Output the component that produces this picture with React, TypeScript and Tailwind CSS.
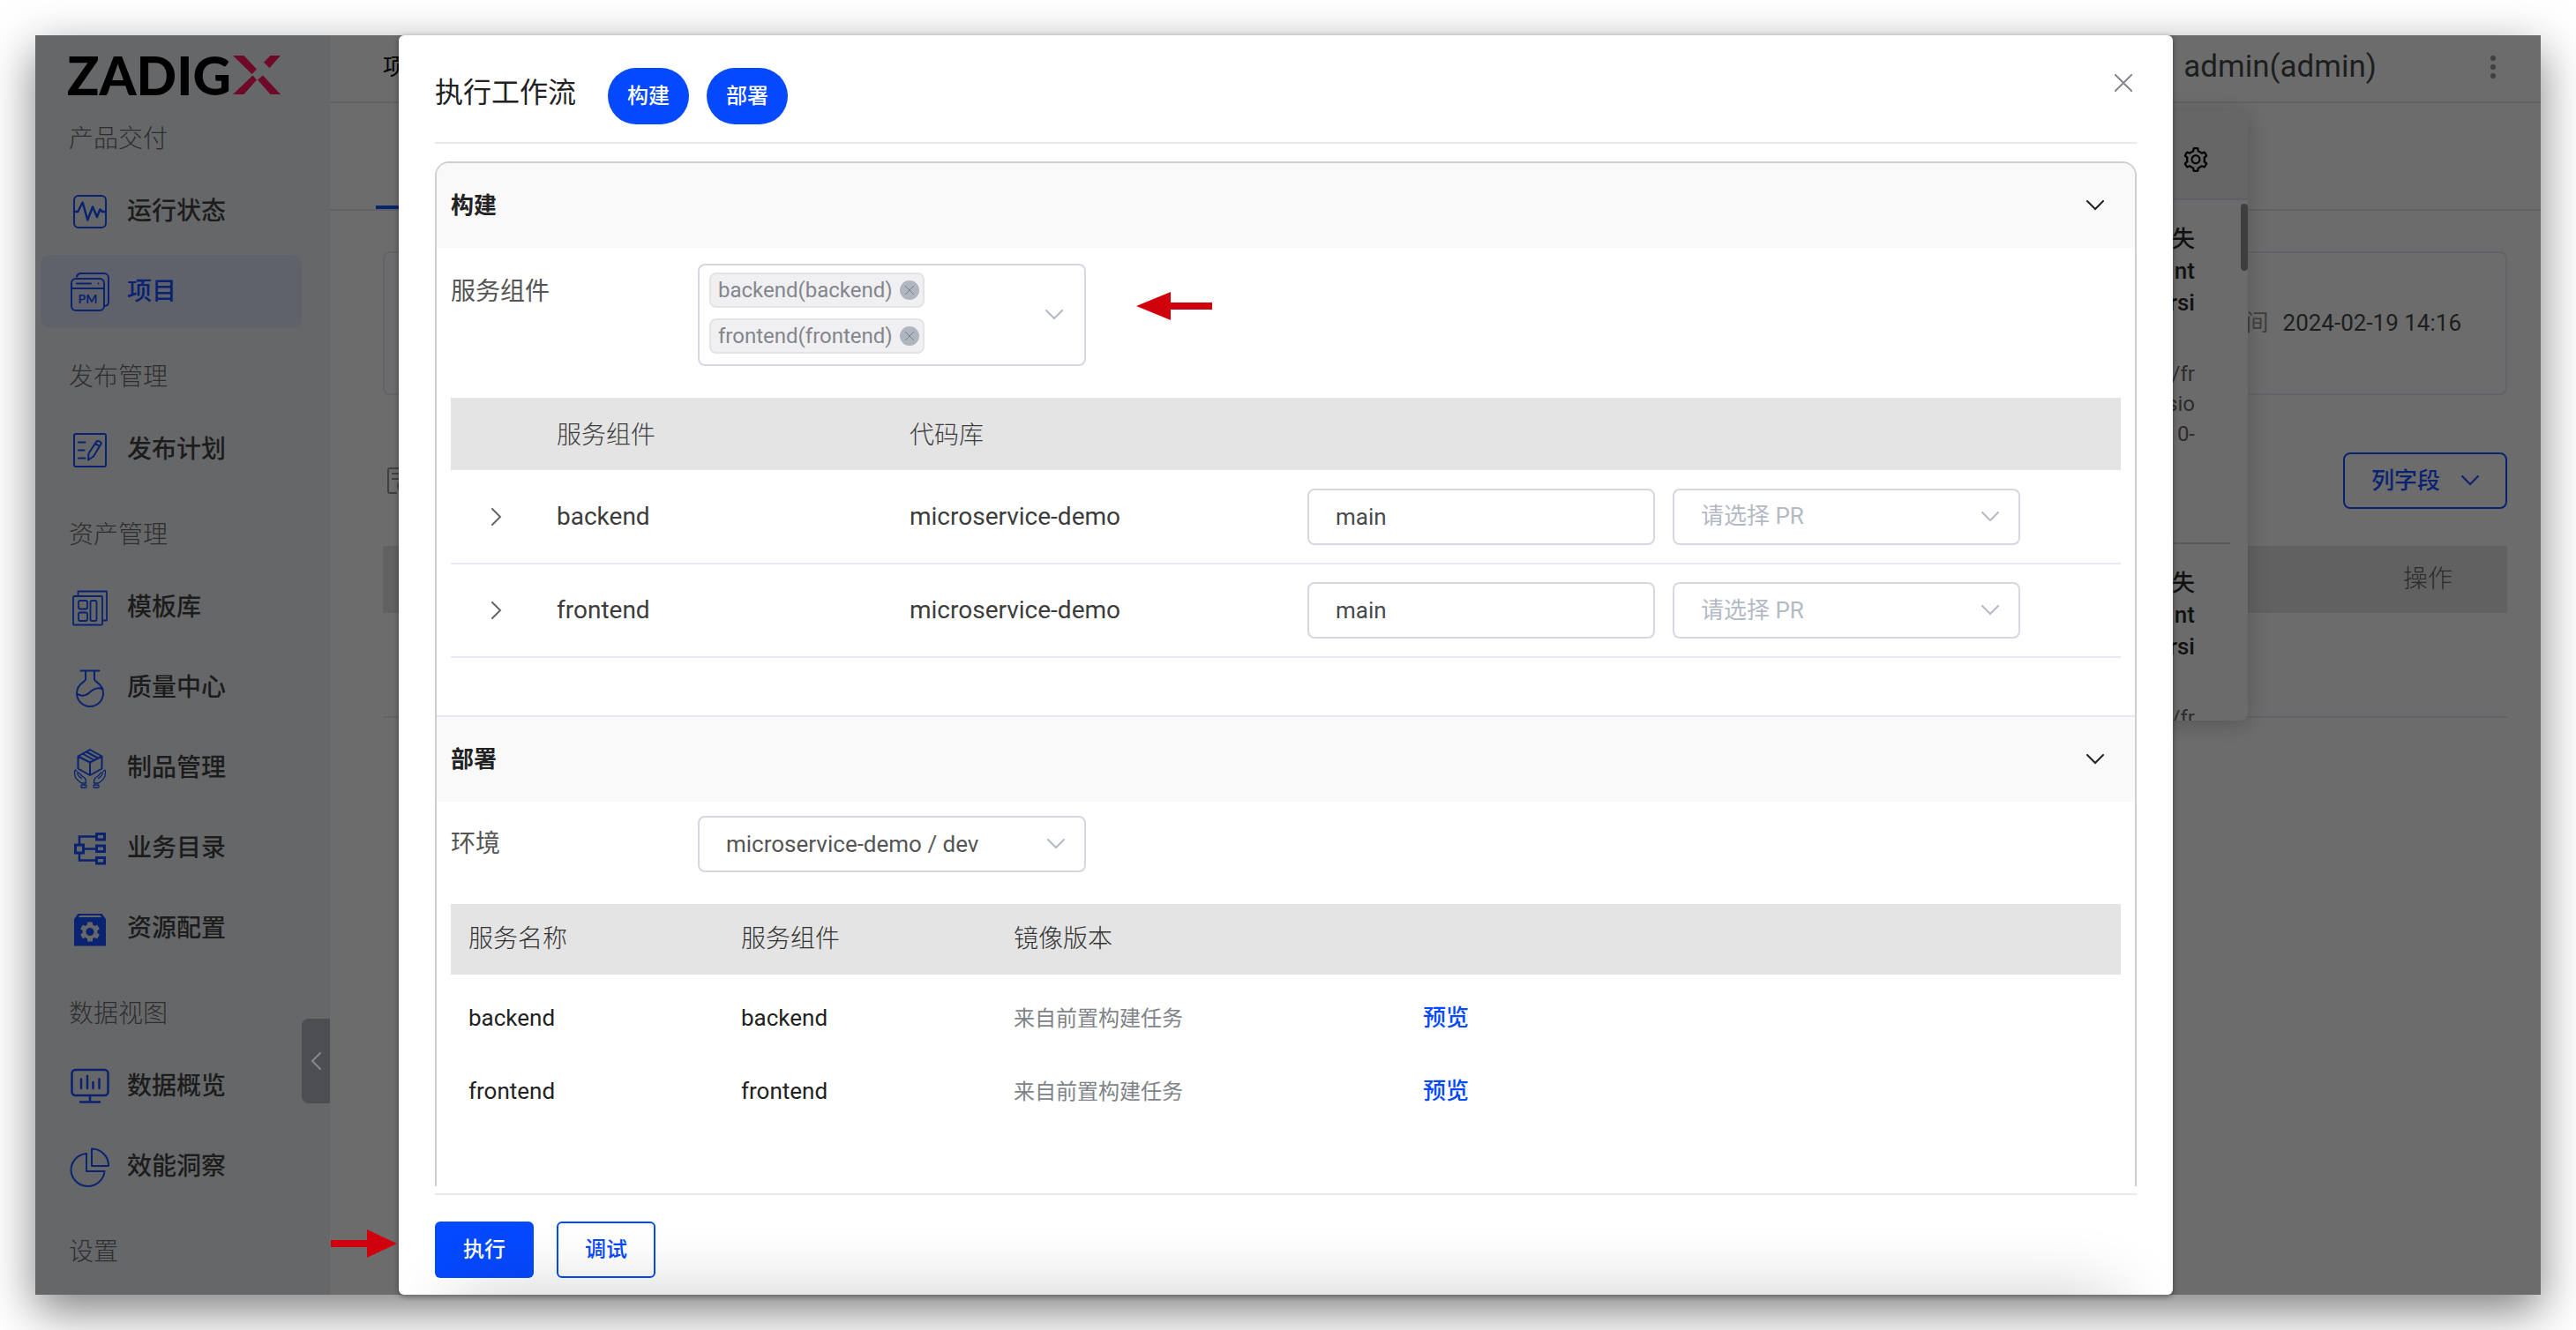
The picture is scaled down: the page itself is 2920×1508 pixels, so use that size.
import { useState } from 'react';
import type { ReactNode } from 'react';
import { AiOutlineSetting } from 'react-icons/ai';

const strokeProps = { fill: 'none', stroke: 'currentColor', strokeWidth: 2, strokeLinecap: 'round', strokeLinejoin: 'round' } as const;

const icons: Record<string, ReactNode> = {
  status: (
    <g {...strokeProps}>
      <rect x="4" y="4" width="36" height="36" rx="5" />
      <path d="M4 22h4.3l5.4-10.500 5.600 20L25 16.500 30 28l3.300-8.500L36 22h4" strokeWidth="2.500" />
    </g>
  ),
  project: (
    <g {...strokeProps}>
      <rect x="1" y="7" width="37" height="36" rx="5" />
      <path d="M7 4.500A5 5 0 0 1 11 1h27a5 5 0 0 1 5 5v27a5 5 0 0 1-4 5M1 18h37M7 12.500h16" />
      <circle cx="31.500" cy="12.500" r="1" fill="currentColor" stroke="none" />
      <text x="19.500" y="35" textAnchor="middle" fontSize="14" fontFamily="Lato" fontWeight="700" fill="currentColor" stroke="none">PM</text>
    </g>
  ),
  plan: (
    <g {...strokeProps}>
      <rect x="4" y="4" width="36" height="37" rx="2" />
      <path d="M9 13.500h7.500M9 22.500h6.500M9 31.500h7.500M20 33.500l.5-7.500 9-13.500q3-1.500 5.500 2L26 29.500zM28 15l5 3" />
    </g>
  ),
  template: (
    <g {...strokeProps} strokeWidth="1.800">
      <path d="M8.500 9V3.500h32.500v33h-5" />
      <rect x="3" y="9" width="33" height="32.500" rx="1" />
      <rect x="9" y="14" width="10" height="9.500" rx="2" />
      <rect x="9" y="27.500" width="10" height="9.500" rx="2" />
      <rect x="22.500" y="14" width="7" height="23" rx="2" />
    </g>
  ),
  flask: (
    <g {...strokeProps}>
      <path d="M11.500 2.500h21M17 3v9.500C17 15 7 17 7 28a15 15 0 0 0 30 0c0-11-10-13-10-15.500V3M7.500 29c8 4 12 0 16-3.500s9-4 13-2" />
    </g>
  ),
  artifact: (
    <g {...strokeProps}>
      <path d="M22 1l13.500 7.500v14L22 30 8.500 22.500v-14zM8.500 8.500L22 15.500l13.500-7M22 15.500V30M13.500 5.500L27 13M18 3.500L31 10.500" />
      <g strokeWidth="1.300">
        <path d="M7 26c-1.500-3-2.500-2-2.500 0 0 8 2 8 8 13h5c0-6-1.500-6-5-8.500-2-2-4-5-4.500-3s3 5 4.500 6" />
        <path d="M37 26c1.500-3 2.500-2 2.500 0 0 8-2 8-8 13h-5c0-6 1.500-6 5-8.500 2-2 4-5 4.500-3s-3 5-4.500 6" />
        <rect x="12" y="41" width="6" height="3" rx="1" />
        <rect x="26" y="41" width="6" height="3" rx="1" />
      </g>
    </g>
  ),
  catalog: (
    <g fill="none" stroke="currentColor" strokeWidth="3">
      <rect x="5.500" y="18" width="9" height="9" />
      <path d="M10 17V8.500h19M10 28v7.500h19M16 22.500h13" strokeWidth="2.500" />
      <rect x="29.500" y="5.500" width="9" height="6.500" />
      <rect x="29.500" y="19" width="9" height="6.500" />
      <rect x="29.500" y="32.500" width="9" height="6.500" />
    </g>
  ),
  config: (
    <g>
      <path d="M4 11l4.500-6h27l4.500 6v30.500H4z" fill="currentColor" />
      <path d="M9 9l1.500-2h23L35 9z" fill="#666769" />
      <g fill="#666769">
        <circle cx="22" cy="25.500" r="8.500" />
        {[0, 60, 120].map(a => (
          <rect key={a} x="19" y="14.500" width="6" height="22" rx="1" transform={`rotate(${a} 22 25.5)`} />
        ))}
      </g>
      <circle cx="22" cy="25.500" r="4.500" fill="currentColor" />
    </g>
  ),
  monitor: (
    <g {...strokeProps} strokeWidth="2.500">
      <rect x="1.500" y="3" width="41" height="29" rx="4" />
      <path d="M12 13.500V24M19 10v14M25.500 17v7M32.500 13.500V24M22 32v7M11 39.500h22" />
    </g>
  ),
  pie: (
    <g {...strokeProps}>
      <path d="M18 7v20h20.500A19 18.500 0 1 1 18 7z" />
      <path d="M24 1.500V21h19A19 19 0 0 0 24 1.500z" />
    </g>
  ),
};

const menu = [
  { title: '产品交付', items: [{ label: '运行状态', icon: 'status' }, { label: '项目', icon: 'project', active: true }] },
  { title: '发布管理', items: [{ label: '发布计划', icon: 'plan' }] },
  {
    title: '资产管理',
    items: [
      { label: '模板库', icon: 'template' },
      { label: '质量中心', icon: 'flask' },
      { label: '制品管理', icon: 'artifact' },
      { label: '业务目录', icon: 'catalog' },
      { label: '资源配置', icon: 'config' },
    ],
  },
  { title: '数据视图', items: [{ label: '数据概览', icon: 'monitor' }, { label: '效能洞察', icon: 'pie' }] },
  { title: '设置', items: [] },
];

const services = ['backend', 'frontend'];

const notices = [
  { title: ['失', 'nt', 'rsi'], detail: ['/fr', 'sio', '0-'] },
  { title: ['失', 'nt', 'rsi'], detail: ['/fr'] },
];

function Chevron({ className = '' }: { className?: string }) {
  return (
    <svg viewBox="0 0 20 12" className={`h-3 w-5 ${className}`} fill="none" stroke="currentColor" strokeWidth="2" strokeLinecap="round">
      <path d="M1 1l9 9 9-9" />
    </svg>
  );
}

function Arrow({ className = '' }: { className?: string }) {
  return (
    <svg viewBox="0 0 86 32" preserveAspectRatio="none" className={className} fill="#d0000c">
      <path d="M0 16L39 0v12h47v8H39v12z" />
    </svg>
  );
}

function Sidebar() {
  return (
    <aside className="relative w-[334px] shrink-0 bg-[#666769]">
      <a href="#" aria-label="ZADIGX" className="ml-9 flex h-[90px] items-center gap-0.5 text-black">
        <span className="font-[Lato] text-[60px] font-black leading-[60px]">ZADIG</span>
        <svg viewBox="0 0 54 44" className="h-11 w-[54px]" fill="#6e0a27">
          <path d="M0 0h12.500L27 15.500 21.500 21zM42.500 0h11.500L41.500 14 35 7.500zM0 44l22.500-21.500 4.500 5L12.500 44zM28 27.500l6-5L54 44H42.500z" />
        </svg>
      </a>
      <nav className="flex flex-col gap-2 pl-1.5">
        {menu.map((group, g) => (
          <div key={group.title} className="flex flex-col gap-2">
            <h2 className={`pl-8 text-[28px] font-light leading-10 text-[#2e2e2e] ${g === 0 ? 'pt-2 pb-3' : 'pt-7 pb-3'}`}>{group.title}</h2>
            {group.items.map(item => (
              <a
                key={item.label}
                href="#"
                className={`flex h-[83px] w-[296px] items-center gap-5 rounded-[10px] pl-[34px] text-[28px] font-medium ${item.active ? 'bg-[#5f626b] text-[#0a2371]' : 'text-[#1c1c1c]'}`}
              >
                <svg viewBox="0 0 44 44" className="size-11 overflow-visible text-[#0a2371]">{icons[item.icon]}</svg>
                {item.label}
              </a>
            ))}
          </div>
        ))}
      </nav>
      <button aria-label="收起" className="absolute right-0 top-[1115px] flex h-24 w-8 items-center justify-center rounded-l-lg bg-[#4d4e52] text-[#85878c]">
        <Chevron className="rotate-90" />
      </button>
    </aside>
  );
}

function Notifications() {
  return (
    <div className="absolute right-[332px] top-[85px] flex h-[692px] w-[200px] flex-col overflow-hidden rounded-lg bg-[#6b6b6b] shadow-[0_4px_24px_rgba(0,0,0,0.2)]">
      <div className="flex h-[102px] shrink-0 items-center justify-end border-b-2 border-[#5f6068] bg-[#666] pt-3 pr-[43px] text-black">
        <button aria-label="设置"><AiOutlineSetting size={32} /></button>
      </div>
      <div className="relative flex-1 text-right">
        {notices.map((n, i) => (
          <div key={i} className="ml-auto mr-5 h-[390px] border-b-2 border-[#5a5a5a] pt-[26px] pr-10">
            {n.title.map(t => <p key={t} className="text-[26px] font-medium leading-9 text-[#111]">{t}</p>)}
            <div className="mt-[46px] text-[24px] leading-[34px] text-[#2c2c2c]">
              {n.detail.map(t => <p key={t}>{t}</p>)}
            </div>
          </div>
        ))}
        <div className="absolute right-0 top-1 h-[76px] w-2 rounded-full bg-[#3d3f3e]" />
      </div>
    </div>
  );
}

function Background() {
  return (
    <main className="relative flex-1 bg-[#6c6c6c]">
      <header className="flex h-[77px] items-center border-b-2 border-[#626262] pl-[60px] pr-12 pb-1 text-black">
        <span className="text-[26px] leading-8">项目</span>
        <span className="ml-auto mr-[126px] text-[35px] leading-10 text-[#1d1f1e]">admin(admin)</span>
        <button aria-label="更多" className="text-[#404040]">
          <svg viewBox="0 0 12 26" className="h-[26px] w-3" fill="currentColor">
            <circle cx="6" cy="3" r="3" /><circle cx="6" cy="13" r="3" /><circle cx="6" cy="23" r="3" />
          </svg>
        </button>
      </header>
      <div className="flex h-[122px] items-end border-b-2 border-[#626262] pl-[52px]">
        <div className="h-1 w-40 bg-[#0a2371]" />
      </div>
      <div className="pl-[60px] pr-[38px] pt-[46px]">
        <section className="flex h-[163px] items-center justify-end gap-4 rounded-lg border-2 border-[#636369] pr-[50px] text-[26px]">
          <span className="text-[#3f3f3f]">时间</span>
          <time className="text-[#1d1f1e]">2024-02-19 14:16</time>
        </section>
        <div className="mt-[65px] flex items-center justify-between">
          <svg viewBox="0 0 32 32" className="ml-1 size-8" fill="none" stroke="#404040" strokeWidth="2">
            <path d="M12 30H4a2 2 0 0 1-2-2V4a2 2 0 0 1 2-2h24v8M6 8h18M6 14h8" />
            <circle cx="21" cy="22" r="8" />
          </svg>
          <button className="flex h-16 w-[186px] items-center justify-center gap-6 rounded-lg border-2 border-[#0a2371] text-[26px] font-medium text-[#0a2371]">
            列字段 <Chevron />
          </button>
        </div>
        <table className="mt-[42px] w-full border-b-2 border-[#636369] text-[28px]">
          <thead>
            <tr className="h-[76px] bg-[#616161] text-[#2a2a2a]"><th className="pr-[62px] text-right font-light">操作</th></tr>
          </thead>
          <tbody><tr className="h-[118px]"><td /></tr></tbody>
        </table>
      </div>
      <Notifications />
    </main>
  );
}

function SectionHeader({ title }: { title: string }) {
  return (
    <div className="flex h-24 items-center justify-between bg-[#f9f9f9] pl-4 pr-[35px] text-[#222]">
      <h3 className="text-[26px] font-bold">{title}</h3>
      <button aria-label={title}><Chevron /></button>
    </div>
  );
}

function BuildSection() {
  const [selected, setSelected] = useState(services);
  return (
    <section className="h-[628px] border-b-2 border-[#e6e9f3]">
      <SectionHeader title="构建" />
      <div className="flex px-4 pt-[18px]">
        <span className="w-[280px] pt-3 text-[28px] leading-10 text-[#555]">服务组件</span>
        <div className="flex h-[116px] w-[440px] items-center justify-between rounded-lg border-2 border-[#d5d8e3] pl-[11px] pr-6">
          <div className="flex flex-col items-start gap-3 pb-1">
            {selected.map(s => (
              <span key={s} className="flex h-10 items-center gap-2 rounded-lg border-2 border-[#e4e4e6] bg-[#f0f0f2] pl-2 pr-1 text-[24px] text-[#83868c]">
                {s}({s})
                <button
                  aria-label={`移除 ${s}`}
                  onClick={() => setSelected(selected.filter(v => v !== s))}
                  className="flex size-[22px] items-center justify-center rounded-full bg-[#b0b6c0] text-[#7b7f87]"
                >
                  <svg viewBox="0 0 10 10" className="size-2.5" stroke="currentColor"><path d="M0 0l10 10M10 0L0 10" /></svg>
                </button>
              </span>
            ))}
          </div>
          <Chevron className="text-[#b4bac5]" />
        </div>
        <Arrow className="ml-[57px] mt-8 h-8 w-[86px]" />
      </div>
      <div className="px-4 pt-9">
        <table className="w-full table-fixed text-left text-[28px] text-[#3c3c3c]">
          <colgroup><col className="w-[100px]" /><col className="w-[400px]" /><col className="w-[451px]" /><col /></colgroup>
          <thead>
            <tr className="h-[82px] bg-[#e4e4e4]">
              <th /><th className="pt-1 pl-5 font-light">服务组件</th><th className="pt-1 pl-5 font-light">代码库</th><th />
            </tr>
          </thead>
          <tbody>
            {services.map(s => (
              <tr key={s} className="h-[106px] border-b-2 border-[#e6e9f3]">
                <td className="pl-[42px]"><button aria-label={`展开 ${s}`} className="flex text-[#666]"><Chevron className="-rotate-90" /></button></td>
                <td className="pl-5">{s}</td>
                <td className="pl-5">microservice-demo</td>
                <td className="pl-5">
                  <div className="flex gap-5 text-[26px]">
                    <input aria-label={`${s} 分支`} defaultValue="main" className="h-16 w-[394px] rounded-lg border-2 border-[#d5d8e3] px-[30px] text-[#484a4d]" />
                    <div className="relative">
                      <select aria-label={`${s} PR`} defaultValue="" className="h-16 w-[394px] appearance-none rounded-lg border-2 border-[#d5d8e3] px-[30px] text-[26px] text-[#b4bac5]">
                        <option value="">请选择 PR</option>
                      </select>
                      <Chevron className="pointer-events-none absolute right-6 top-[26px] text-[#b4bac5]" />
                    </div>
                  </div>
                </td>
              </tr>
            ))}
          </tbody>
        </table>
      </div>
    </section>
  );
}

function DeploySection() {
  return (
    <section>
      <SectionHeader title="部署" />
      <div className="flex items-center px-4 pt-4">
        <label htmlFor="env" className="w-[280px] text-[28px] text-[#555]">环境</label>
        <div className="relative">
          <select id="env" className="h-16 w-[440px] appearance-none rounded-lg border-2 border-[#d5d8e3] px-[30px] text-[26px] text-[#555]">
            <option>microservice-demo / dev</option>
          </select>
          <Chevron className="pointer-events-none absolute right-6 top-[26px] text-[#b4bac5]" />
        </div>
      </div>
      <div className="px-4 pt-9">
        <table className="w-full table-fixed text-left text-[26px] text-[#222]">
          <colgroup><col className="w-[309px]" /><col className="w-[309px]" /><col className="w-[464px]" /><col /></colgroup>
          <thead>
            <tr className="h-20 bg-[#e4e4e4] text-[28px] text-[#333]">
              <th className="pl-5 font-light">服务名称</th><th className="pl-5 font-light">服务组件</th><th className="pl-5 font-light">镜像版本</th><th />
            </tr>
          </thead>
          <tbody>
            {services.map(s => (
              <tr key={s} className="h-[83px]">
                <td className="pl-5 pt-4">{s}</td>
                <td className="pl-5 pt-4">{s}</td>
                <td className="pl-5 pt-4 text-[24px] text-[#808388]">来自前置构建任务</td>
                <td className="pl-5 pt-4"><a href="#" className="font-medium text-[#0549ff]">预览</a></td>
              </tr>
            ))}
          </tbody>
        </table>
      </div>
    </section>
  );
}

function RunDialog() {
  return (
    <div role="dialog" aria-labelledby="dialog-title" className="absolute inset-y-0 left-[412px] right-[417px] flex flex-col overflow-hidden rounded-md bg-white px-[41px] shadow-[0_2px_6px_rgba(0,0,0,0.4)]">
      <header className="flex items-start border-b-2 border-[#e6e9f3] pt-[37px] pb-5">
        <h1 id="dialog-title" className="pt-2 text-[32px] leading-10 text-[#222]">执行工作流</h1>
        <div className="ml-9 flex gap-5">
          {['构建', '部署'].map(t => (
            <button key={t} className="h-16 w-[92px] rounded-full bg-[#0549ff] text-[24px] font-medium text-white">{t}</button>
          ))}
        </div>
      </header>
      <button aria-label="关闭" className="absolute right-[46px] top-11 text-[#85888f]">
        <svg viewBox="0 0 20 20" className="size-5" stroke="currentColor" strokeWidth="2"><path d="M0 0l20 20M20 0L0 20" /></svg>
      </button>
      <div className="mt-5 mb-2 flex-1 overflow-hidden rounded-t-2xl border-2 border-b-0 border-[#cfcfcf]">
        <BuildSection />
        <DeploySection />
      </div>
      <footer className="flex gap-[26px] border-t-2 border-[#e6e9f3] pt-[30px] pb-[19px]">
        <button className="h-16 w-28 rounded-md bg-[#0549ff] text-[24px] font-medium text-white">执行</button>
        <button className="h-16 w-28 rounded-md border-2 border-[#0549ff] text-[24px] font-medium text-[#0549ff]">调试</button>
      </footer>
      <div className="pointer-events-none absolute inset-x-16 top-full h-40 shadow-[0_0_80px_rgba(0,0,0,0.2)]" />
    </div>
  );
}

export default function App() {
  return (
    <div className="min-h-screen bg-white p-10 font-[Roboto,'Noto_Sans_CJK_SC',sans-serif]">
      <div className="relative h-[calc(100vh-80px)] shadow-[0_18px_50px_rgba(0,0,0,0.5)]">
        <div className="flex h-full overflow-hidden">
          <Sidebar />
          <Background />
        </div>
        <RunDialog />
        <Arrow className="absolute bottom-[42px] left-[335px] h-8 w-[75px] rotate-180" />
      </div>
    </div>
  );
}
